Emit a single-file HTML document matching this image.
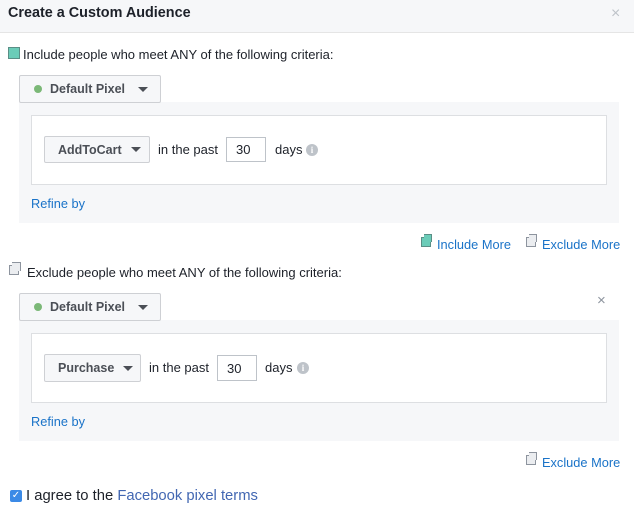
<!DOCTYPE html>
<html><head><style>
*{box-sizing:border-box;margin:0;padding:0}
body{width:634px;height:515px;overflow:hidden;background:#fff;font-family:"Liberation Sans",Helvetica,sans-serif;font-size:13px;color:#1d2129;position:relative}
.a{position:absolute}
.hdr{left:0;top:0;width:634px;height:33px;background:#f6f7f9;border-bottom:1px solid #e5e5e5}
.btn{background:#f6f7f9;border:1px solid #ced0d4;border-radius:2px;font-weight:bold;color:#4b4f56;font-size:12.5px;display:flex;align-items:center}
.caret{display:inline-block;width:0;height:0;border-left:5px solid transparent;border-right:5px solid transparent;border-top:5px solid #4b4f56}
.panel{background:#f6f7f9}
.inner{background:#fff;border:1px solid #dddfe2}
.inp{background:#fff;border:1px solid #bec3c9;display:flex;align-items:center;padding-left:9px}
.link{color:#4267b2}
.blue{color:#1a73c8;font-size:12.8px}
.info{width:12px;height:12px;border-radius:50%;background:#bec3c9;color:#fff;font-size:9px;font-weight:bold;text-align:center;line-height:12px;font-family:"Liberation Serif",serif}
.dot{width:8px;height:8px;border-radius:50%;background:#7bb877;display:inline-block;margin-right:8px}
</style></head><body>
<div class="a hdr"></div>
<div class="a" style="left:8px;top:5px;font-size:14.4px;font-weight:bold;color:#1d2129">Create a Custom Audience</div>
<div class="a" style="left:611px;top:5px;font-size:16px;color:#bec3c9">×</div>

<div class="a" style="left:8px;top:47px;width:12px;height:12px;background:#6bccb8;border:1px solid #5a8e86"></div>
<div class="a" style="left:23px;top:47px">Include people who meet ANY of the following criteria:</div>
<div class="a panel" style="left:19px;top:102px;width:600px;height:121px"></div>
<div class="a btn" style="left:19px;top:75px;width:142px;height:28px;padding-left:14px"><span class="dot"></span>Default Pixel<span class="caret" style="margin-left:13px"></span></div>
<div class="a inner" style="left:31px;top:115px;width:576px;height:70px"></div>
<div class="a btn" style="left:44px;top:136px;width:106px;height:27px;padding-left:13px">AddToCart<span class="caret" style="margin-left:9px"></span></div>
<div class="a" style="left:158px;top:142px">in the past</div>
<div class="a inp" style="left:226px;top:137px;width:40px;height:25px">30</div>
<div class="a" style="left:275px;top:142px">days</div>
<div class="a info" style="left:306px;top:144px">i</div>
<div class="a blue" style="left:31px;top:196px">Refine by</div>

<div class="a" style="left:421px;top:237px;width:10px;height:10px;background:#6bccb8;border:1px solid #5a8e86"></div>
<div class="a" style="left:424px;top:234px;width:8px;height:8px;background:#6bccb8;border:1px solid #5a8e86;border-bottom:none;border-left:none"></div>
<div class="a blue" style="left:437px;top:237px">Include More</div>
<div class="a" style="left:526px;top:237px;width:10px;height:10px;background:#ebedf0;border:1px solid #8d949e"></div>
<div class="a" style="left:529px;top:234px;width:8px;height:8px;background:#ebedf0;border:1px solid #8d949e;border-bottom:none;border-left:none"></div>
<div class="a blue" style="left:542px;top:237px">Exclude More</div>

<div class="a" style="left:9px;top:265px;width:10px;height:10px;background:#ebedf0;border:1px solid #8d949e"></div>
<div class="a" style="left:12px;top:262px;width:9px;height:9px;background:#ebedf0;border:1px solid #8d949e;border-bottom:none;border-left:none"></div>
<div class="a" style="left:27px;top:265px">Exclude people who meet ANY of the following criteria:</div>
<div class="a panel" style="left:19px;top:320px;width:600px;height:121px"></div>
<div class="a btn" style="left:19px;top:293px;width:142px;height:28px;padding-left:14px"><span class="dot"></span>Default Pixel<span class="caret" style="margin-left:13px"></span></div>
<div class="a" style="left:597px;top:292px;font-size:15px;color:#8d949e">×</div>
<div class="a inner" style="left:31px;top:333px;width:576px;height:70px"></div>
<div class="a btn" style="left:44px;top:354px;width:97px;height:28px;padding-left:13px">Purchase<span class="caret" style="margin-left:9px"></span></div>
<div class="a" style="left:149px;top:360px">in the past</div>
<div class="a inp" style="left:217px;top:355px;width:40px;height:26px">30</div>
<div class="a" style="left:265px;top:360px">days</div>
<div class="a info" style="left:297px;top:362px">i</div>
<div class="a blue" style="left:31px;top:414px">Refine by</div>

<div class="a" style="left:526px;top:455px;width:10px;height:10px;background:#ebedf0;border:1px solid #8d949e"></div>
<div class="a" style="left:529px;top:452px;width:8px;height:8px;background:#ebedf0;border:1px solid #8d949e;border-bottom:none;border-left:none"></div>
<div class="a blue" style="left:542px;top:455px">Exclude More</div>

<div class="a" style="left:10px;top:490px;width:12px;height:12px;background:#3b8ae6;border-radius:2px;color:#fff;font-size:10px;line-height:12px;text-align:center">✓</div>
<div class="a" style="left:26px;top:488px;font-size:14.8px">I agree to the <span class="link">Facebook pixel terms</span></div>
</body></html>
